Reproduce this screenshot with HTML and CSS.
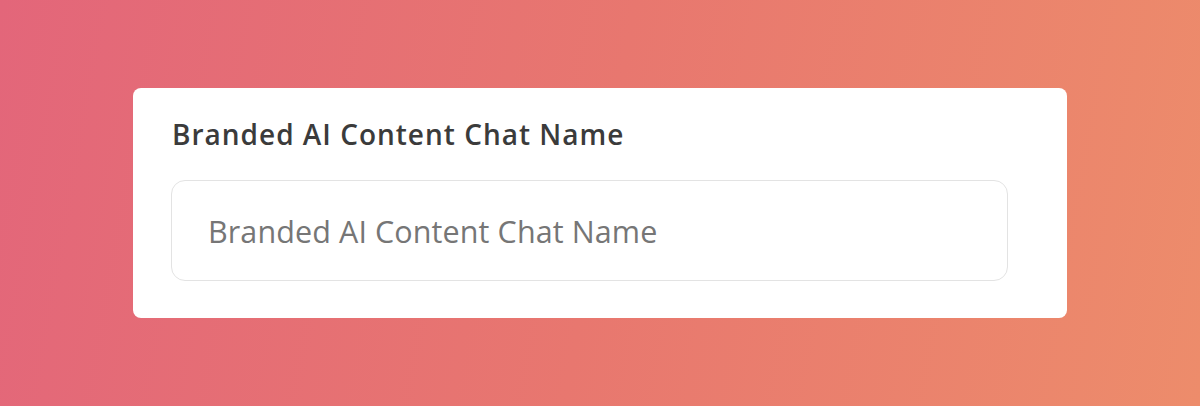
FILE: index.html
```html
<!DOCTYPE html>
<html>
<head>
<meta charset="utf-8">
<link rel="stylesheet" href="styles.css">
</head>
<body>
<div class="stage">
  <div class="card">
    <label class="label" for="name">Branded AI Content Chat Name</label>
    <input id="name" class="field" type="text" placeholder="Branded AI Content Chat Name">
  </div>
</div>
</body>
</html>
```
FILE: styles.css
```css
html, body {
  margin: 0;
  padding: 0;
}
.stage {
  width: 1200px;
  height: 406px;
  background: linear-gradient(100deg, #e3667a 0%, #e8776f 50%, #ed8c6b 100%);
  display: flex;
  align-items: center;
  justify-content: center;
  font-family: "Open Sans", "Liberation Sans", sans-serif;
}
.card {
  box-sizing: border-box;
  width: 934px;
  height: 230px;
  background: #fff;
  border-radius: 8px;
  padding: 32px 59px 0 38px;
  display: flex;
  flex-direction: column;
  gap: 32px;
}
.label {
  display: block;
  font-size: 28px;
  font-weight: 600;
  letter-spacing: 1px;
  color: #3b3b3b;
  line-height: 28px;
  margin-left: 1px;
}
.field {
  box-sizing: border-box;
  width: 837px;
  height: 101px;
  border: 1.5px solid #e3e3e3;
  border-radius: 14px;
  padding: 0 36px;
  font-family: inherit;
  font-size: 30.5px;
  letter-spacing: 0.1px;
  color: #333;
  outline: none;
  background: #fff;
}
.field::placeholder {
  color: #767676;
}
```
